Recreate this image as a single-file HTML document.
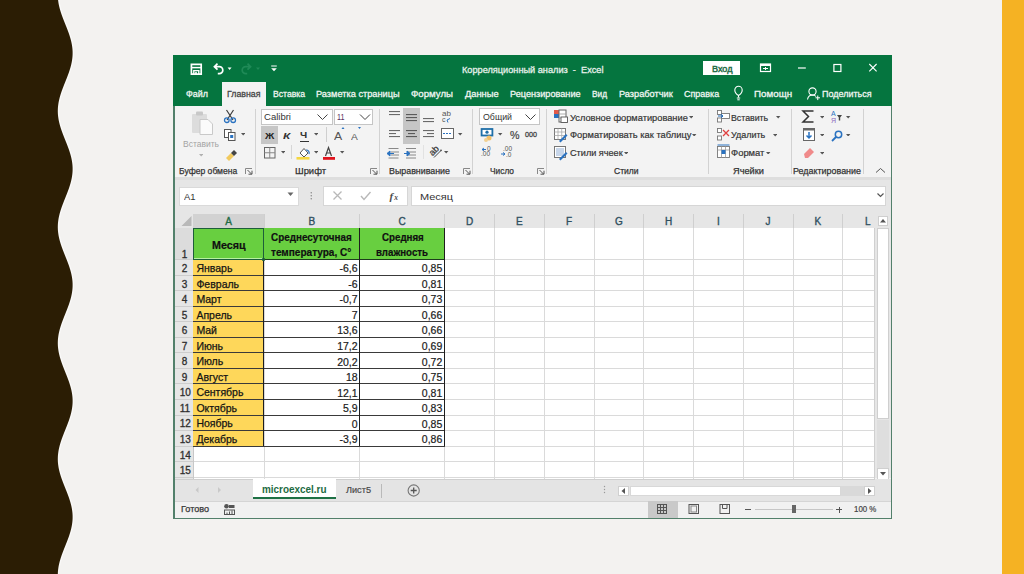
<!DOCTYPE html>
<html><head><meta charset="utf-8"><style>
html,body{margin:0;padding:0}
body{width:1024px;height:574px;overflow:hidden;position:relative;background:#f3f2f0;font-family:"Liberation Sans",sans-serif}
svg{display:block}
</style></head><body>
<svg style="position:absolute;left:0;top:0" width="1024" height="574"><path d="M58.97,0.0 L59.09,1.0 L59.23,2.0 L59.38,3.0 L59.56,4.0 L59.76,5.0 L59.98,6.0 L60.21,7.0 L60.46,8.0 L60.73,9.0 L61.01,10.0 L61.31,11.0 L61.62,12.0 L61.95,13.0 L62.28,14.0 L62.63,15.0 L62.99,16.0 L63.36,17.0 L63.74,18.0 L64.12,19.0 L64.51,20.0 L64.90,21.0 L65.30,22.0 L65.70,23.0 L66.10,24.0 L66.50,25.0 L66.90,26.0 L67.30,27.0 L67.69,28.0 L68.08,29.0 L68.46,30.0 L68.84,31.0 L69.21,32.0 L69.57,33.0 L69.92,34.0 L70.25,35.0 L70.58,36.0 L70.89,37.0 L71.19,38.0 L71.47,39.0 L71.74,40.0 L71.99,41.0 L72.22,42.0 L72.44,43.0 L72.64,44.0 L72.82,45.0 L72.97,46.0 L73.11,47.0 L73.23,48.0 L73.33,49.0 L73.40,50.0 L73.46,51.0 L73.49,52.0 L73.50,53.0 L73.49,54.0 L73.46,55.0 L73.40,56.0 L73.33,57.0 L73.23,58.0 L73.11,59.0 L72.97,60.0 L72.82,61.0 L72.64,62.0 L72.44,63.0 L72.22,64.0 L71.99,65.0 L71.74,66.0 L71.47,67.0 L71.19,68.0 L70.89,69.0 L70.58,70.0 L70.25,71.0 L69.92,72.0 L69.57,73.0 L69.21,74.0 L68.84,75.0 L68.46,76.0 L68.08,77.0 L67.69,78.0 L67.30,79.0 L66.90,80.0 L66.50,81.0 L66.10,82.0 L65.70,83.0 L65.30,84.0 L64.90,85.0 L64.51,86.0 L64.12,87.0 L63.74,88.0 L63.36,89.0 L62.99,90.0 L62.63,91.0 L62.28,92.0 L61.95,93.0 L61.62,94.0 L61.31,95.0 L61.01,96.0 L60.73,97.0 L60.46,98.0 L60.21,99.0 L59.98,100.0 L59.76,101.0 L59.56,102.0 L59.38,103.0 L59.23,104.0 L59.09,105.0 L58.97,106.0 L58.87,107.0 L58.80,108.0 L58.74,109.0 L58.71,110.0 L58.70,111.0 L58.71,112.0 L58.74,113.0 L58.80,114.0 L58.87,115.0 L58.97,116.0 L59.09,117.0 L59.23,118.0 L59.38,119.0 L59.56,120.0 L59.76,121.0 L59.98,122.0 L60.21,123.0 L60.46,124.0 L60.73,125.0 L61.01,126.0 L61.31,127.0 L61.62,128.0 L61.95,129.0 L62.28,130.0 L62.63,131.0 L62.99,132.0 L63.36,133.0 L63.74,134.0 L64.12,135.0 L64.51,136.0 L64.90,137.0 L65.30,138.0 L65.70,139.0 L66.10,140.0 L66.50,141.0 L66.90,142.0 L67.30,143.0 L67.69,144.0 L68.08,145.0 L68.46,146.0 L68.84,147.0 L69.21,148.0 L69.57,149.0 L69.92,150.0 L70.25,151.0 L70.58,152.0 L70.89,153.0 L71.19,154.0 L71.47,155.0 L71.74,156.0 L71.99,157.0 L72.22,158.0 L72.44,159.0 L72.64,160.0 L72.82,161.0 L72.97,162.0 L73.11,163.0 L73.23,164.0 L73.33,165.0 L73.40,166.0 L73.46,167.0 L73.49,168.0 L73.50,169.0 L73.49,170.0 L73.46,171.0 L73.40,172.0 L73.33,173.0 L73.23,174.0 L73.11,175.0 L72.97,176.0 L72.82,177.0 L72.64,178.0 L72.44,179.0 L72.22,180.0 L71.99,181.0 L71.74,182.0 L71.47,183.0 L71.19,184.0 L70.89,185.0 L70.58,186.0 L70.25,187.0 L69.92,188.0 L69.57,189.0 L69.21,190.0 L68.84,191.0 L68.46,192.0 L68.08,193.0 L67.69,194.0 L67.30,195.0 L66.90,196.0 L66.50,197.0 L66.10,198.0 L65.70,199.0 L65.30,200.0 L64.90,201.0 L64.51,202.0 L64.12,203.0 L63.74,204.0 L63.36,205.0 L62.99,206.0 L62.63,207.0 L62.28,208.0 L61.95,209.0 L61.62,210.0 L61.31,211.0 L61.01,212.0 L60.73,213.0 L60.46,214.0 L60.21,215.0 L59.98,216.0 L59.76,217.0 L59.56,218.0 L59.38,219.0 L59.23,220.0 L59.09,221.0 L58.97,222.0 L58.87,223.0 L58.80,224.0 L58.74,225.0 L58.71,226.0 L58.70,227.0 L58.71,228.0 L58.74,229.0 L58.80,230.0 L58.87,231.0 L58.97,232.0 L59.09,233.0 L59.23,234.0 L59.38,235.0 L59.56,236.0 L59.76,237.0 L59.98,238.0 L60.21,239.0 L60.46,240.0 L60.73,241.0 L61.01,242.0 L61.31,243.0 L61.62,244.0 L61.95,245.0 L62.28,246.0 L62.63,247.0 L62.99,248.0 L63.36,249.0 L63.74,250.0 L64.12,251.0 L64.51,252.0 L64.90,253.0 L65.30,254.0 L65.70,255.0 L66.10,256.0 L66.50,257.0 L66.90,258.0 L67.30,259.0 L67.69,260.0 L68.08,261.0 L68.46,262.0 L68.84,263.0 L69.21,264.0 L69.57,265.0 L69.92,266.0 L70.25,267.0 L70.58,268.0 L70.89,269.0 L71.19,270.0 L71.47,271.0 L71.74,272.0 L71.99,273.0 L72.22,274.0 L72.44,275.0 L72.64,276.0 L72.82,277.0 L72.97,278.0 L73.11,279.0 L73.23,280.0 L73.33,281.0 L73.40,282.0 L73.46,283.0 L73.49,284.0 L73.50,285.0 L73.49,286.0 L73.46,287.0 L73.40,288.0 L73.33,289.0 L73.23,290.0 L73.11,291.0 L72.97,292.0 L72.82,293.0 L72.64,294.0 L72.44,295.0 L72.22,296.0 L71.99,297.0 L71.74,298.0 L71.47,299.0 L71.19,300.0 L70.89,301.0 L70.58,302.0 L70.25,303.0 L69.92,304.0 L69.57,305.0 L69.21,306.0 L68.84,307.0 L68.46,308.0 L68.08,309.0 L67.69,310.0 L67.30,311.0 L66.90,312.0 L66.50,313.0 L66.10,314.0 L65.70,315.0 L65.30,316.0 L64.90,317.0 L64.51,318.0 L64.12,319.0 L63.74,320.0 L63.36,321.0 L62.99,322.0 L62.63,323.0 L62.28,324.0 L61.95,325.0 L61.62,326.0 L61.31,327.0 L61.01,328.0 L60.73,329.0 L60.46,330.0 L60.21,331.0 L59.98,332.0 L59.76,333.0 L59.56,334.0 L59.38,335.0 L59.23,336.0 L59.09,337.0 L58.97,338.0 L58.87,339.0 L58.80,340.0 L58.74,341.0 L58.71,342.0 L58.70,343.0 L58.71,344.0 L58.74,345.0 L58.80,346.0 L58.87,347.0 L58.97,348.0 L59.09,349.0 L59.23,350.0 L59.38,351.0 L59.56,352.0 L59.76,353.0 L59.98,354.0 L60.21,355.0 L60.46,356.0 L60.73,357.0 L61.01,358.0 L61.31,359.0 L61.62,360.0 L61.95,361.0 L62.28,362.0 L62.63,363.0 L62.99,364.0 L63.36,365.0 L63.74,366.0 L64.12,367.0 L64.51,368.0 L64.90,369.0 L65.30,370.0 L65.70,371.0 L66.10,372.0 L66.50,373.0 L66.90,374.0 L67.30,375.0 L67.69,376.0 L68.08,377.0 L68.46,378.0 L68.84,379.0 L69.21,380.0 L69.57,381.0 L69.92,382.0 L70.25,383.0 L70.58,384.0 L70.89,385.0 L71.19,386.0 L71.47,387.0 L71.74,388.0 L71.99,389.0 L72.22,390.0 L72.44,391.0 L72.64,392.0 L72.82,393.0 L72.97,394.0 L73.11,395.0 L73.23,396.0 L73.33,397.0 L73.40,398.0 L73.46,399.0 L73.49,400.0 L73.50,401.0 L73.49,402.0 L73.46,403.0 L73.40,404.0 L73.33,405.0 L73.23,406.0 L73.11,407.0 L72.97,408.0 L72.82,409.0 L72.64,410.0 L72.44,411.0 L72.22,412.0 L71.99,413.0 L71.74,414.0 L71.47,415.0 L71.19,416.0 L70.89,417.0 L70.58,418.0 L70.25,419.0 L69.92,420.0 L69.57,421.0 L69.21,422.0 L68.84,423.0 L68.46,424.0 L68.08,425.0 L67.69,426.0 L67.30,427.0 L66.90,428.0 L66.50,429.0 L66.10,430.0 L65.70,431.0 L65.30,432.0 L64.90,433.0 L64.51,434.0 L64.12,435.0 L63.74,436.0 L63.36,437.0 L62.99,438.0 L62.63,439.0 L62.28,440.0 L61.95,441.0 L61.62,442.0 L61.31,443.0 L61.01,444.0 L60.73,445.0 L60.46,446.0 L60.21,447.0 L59.98,448.0 L59.76,449.0 L59.56,450.0 L59.38,451.0 L59.23,452.0 L59.09,453.0 L58.97,454.0 L58.87,455.0 L58.80,456.0 L58.74,457.0 L58.71,458.0 L58.70,459.0 L58.71,460.0 L58.74,461.0 L58.80,462.0 L58.87,463.0 L58.97,464.0 L59.09,465.0 L59.23,466.0 L59.38,467.0 L59.56,468.0 L59.76,469.0 L59.98,470.0 L60.21,471.0 L60.46,472.0 L60.73,473.0 L61.01,474.0 L61.31,475.0 L61.62,476.0 L61.95,477.0 L62.28,478.0 L62.63,479.0 L62.99,480.0 L63.36,481.0 L63.74,482.0 L64.12,483.0 L64.51,484.0 L64.90,485.0 L65.30,486.0 L65.70,487.0 L66.10,488.0 L66.50,489.0 L66.90,490.0 L67.30,491.0 L67.69,492.0 L68.08,493.0 L68.46,494.0 L68.84,495.0 L69.21,496.0 L69.57,497.0 L69.92,498.0 L70.25,499.0 L70.58,500.0 L70.89,501.0 L71.19,502.0 L71.47,503.0 L71.74,504.0 L71.99,505.0 L72.22,506.0 L72.44,507.0 L72.64,508.0 L72.82,509.0 L72.97,510.0 L73.11,511.0 L73.23,512.0 L73.33,513.0 L73.40,514.0 L73.46,515.0 L73.49,516.0 L73.50,517.0 L73.49,518.0 L73.46,519.0 L73.40,520.0 L73.33,521.0 L73.23,522.0 L73.11,523.0 L72.97,524.0 L72.82,525.0 L72.64,526.0 L72.44,527.0 L72.22,528.0 L71.99,529.0 L71.74,530.0 L71.47,531.0 L71.19,532.0 L70.89,533.0 L70.58,534.0 L70.25,535.0 L69.92,536.0 L69.57,537.0 L69.21,538.0 L68.84,539.0 L68.46,540.0 L68.08,541.0 L67.69,542.0 L67.30,543.0 L66.90,544.0 L66.50,545.0 L66.10,546.0 L65.70,547.0 L65.30,548.0 L64.90,549.0 L64.51,550.0 L64.12,551.0 L63.74,552.0 L63.36,553.0 L62.99,554.0 L62.63,555.0 L62.28,556.0 L61.95,557.0 L61.62,558.0 L61.31,559.0 L61.01,560.0 L60.73,561.0 L60.46,562.0 L60.21,563.0 L59.98,564.0 L59.76,565.0 L59.56,566.0 L59.38,567.0 L59.23,568.0 L59.09,569.0 L58.97,570.0 L58.87,571.0 L58.80,572.0 L58.74,573.0 L58.71,574.0 L58.70,575.0" fill="none" stroke="#ffffff" stroke-opacity="0.6" stroke-width="1"/><path d="M0,0 L58.07,0.0 L58.19,1.0 L58.33,2.0 L58.48,3.0 L58.66,4.0 L58.86,5.0 L59.08,6.0 L59.31,7.0 L59.56,8.0 L59.83,9.0 L60.11,10.0 L60.41,11.0 L60.72,12.0 L61.05,13.0 L61.38,14.0 L61.73,15.0 L62.09,16.0 L62.46,17.0 L62.84,18.0 L63.22,19.0 L63.61,20.0 L64.00,21.0 L64.40,22.0 L64.80,23.0 L65.20,24.0 L65.60,25.0 L66.00,26.0 L66.40,27.0 L66.79,28.0 L67.18,29.0 L67.56,30.0 L67.94,31.0 L68.31,32.0 L68.67,33.0 L69.02,34.0 L69.35,35.0 L69.68,36.0 L69.99,37.0 L70.29,38.0 L70.57,39.0 L70.84,40.0 L71.09,41.0 L71.32,42.0 L71.54,43.0 L71.74,44.0 L71.92,45.0 L72.07,46.0 L72.21,47.0 L72.33,48.0 L72.43,49.0 L72.50,50.0 L72.56,51.0 L72.59,52.0 L72.60,53.0 L72.59,54.0 L72.56,55.0 L72.50,56.0 L72.43,57.0 L72.33,58.0 L72.21,59.0 L72.07,60.0 L71.92,61.0 L71.74,62.0 L71.54,63.0 L71.32,64.0 L71.09,65.0 L70.84,66.0 L70.57,67.0 L70.29,68.0 L69.99,69.0 L69.68,70.0 L69.35,71.0 L69.02,72.0 L68.67,73.0 L68.31,74.0 L67.94,75.0 L67.56,76.0 L67.18,77.0 L66.79,78.0 L66.40,79.0 L66.00,80.0 L65.60,81.0 L65.20,82.0 L64.80,83.0 L64.40,84.0 L64.00,85.0 L63.61,86.0 L63.22,87.0 L62.84,88.0 L62.46,89.0 L62.09,90.0 L61.73,91.0 L61.38,92.0 L61.05,93.0 L60.72,94.0 L60.41,95.0 L60.11,96.0 L59.83,97.0 L59.56,98.0 L59.31,99.0 L59.08,100.0 L58.86,101.0 L58.66,102.0 L58.48,103.0 L58.33,104.0 L58.19,105.0 L58.07,106.0 L57.97,107.0 L57.90,108.0 L57.84,109.0 L57.81,110.0 L57.80,111.0 L57.81,112.0 L57.84,113.0 L57.90,114.0 L57.97,115.0 L58.07,116.0 L58.19,117.0 L58.33,118.0 L58.48,119.0 L58.66,120.0 L58.86,121.0 L59.08,122.0 L59.31,123.0 L59.56,124.0 L59.83,125.0 L60.11,126.0 L60.41,127.0 L60.72,128.0 L61.05,129.0 L61.38,130.0 L61.73,131.0 L62.09,132.0 L62.46,133.0 L62.84,134.0 L63.22,135.0 L63.61,136.0 L64.00,137.0 L64.40,138.0 L64.80,139.0 L65.20,140.0 L65.60,141.0 L66.00,142.0 L66.40,143.0 L66.79,144.0 L67.18,145.0 L67.56,146.0 L67.94,147.0 L68.31,148.0 L68.67,149.0 L69.02,150.0 L69.35,151.0 L69.68,152.0 L69.99,153.0 L70.29,154.0 L70.57,155.0 L70.84,156.0 L71.09,157.0 L71.32,158.0 L71.54,159.0 L71.74,160.0 L71.92,161.0 L72.07,162.0 L72.21,163.0 L72.33,164.0 L72.43,165.0 L72.50,166.0 L72.56,167.0 L72.59,168.0 L72.60,169.0 L72.59,170.0 L72.56,171.0 L72.50,172.0 L72.43,173.0 L72.33,174.0 L72.21,175.0 L72.07,176.0 L71.92,177.0 L71.74,178.0 L71.54,179.0 L71.32,180.0 L71.09,181.0 L70.84,182.0 L70.57,183.0 L70.29,184.0 L69.99,185.0 L69.68,186.0 L69.35,187.0 L69.02,188.0 L68.67,189.0 L68.31,190.0 L67.94,191.0 L67.56,192.0 L67.18,193.0 L66.79,194.0 L66.40,195.0 L66.00,196.0 L65.60,197.0 L65.20,198.0 L64.80,199.0 L64.40,200.0 L64.00,201.0 L63.61,202.0 L63.22,203.0 L62.84,204.0 L62.46,205.0 L62.09,206.0 L61.73,207.0 L61.38,208.0 L61.05,209.0 L60.72,210.0 L60.41,211.0 L60.11,212.0 L59.83,213.0 L59.56,214.0 L59.31,215.0 L59.08,216.0 L58.86,217.0 L58.66,218.0 L58.48,219.0 L58.33,220.0 L58.19,221.0 L58.07,222.0 L57.97,223.0 L57.90,224.0 L57.84,225.0 L57.81,226.0 L57.80,227.0 L57.81,228.0 L57.84,229.0 L57.90,230.0 L57.97,231.0 L58.07,232.0 L58.19,233.0 L58.33,234.0 L58.48,235.0 L58.66,236.0 L58.86,237.0 L59.08,238.0 L59.31,239.0 L59.56,240.0 L59.83,241.0 L60.11,242.0 L60.41,243.0 L60.72,244.0 L61.05,245.0 L61.38,246.0 L61.73,247.0 L62.09,248.0 L62.46,249.0 L62.84,250.0 L63.22,251.0 L63.61,252.0 L64.00,253.0 L64.40,254.0 L64.80,255.0 L65.20,256.0 L65.60,257.0 L66.00,258.0 L66.40,259.0 L66.79,260.0 L67.18,261.0 L67.56,262.0 L67.94,263.0 L68.31,264.0 L68.67,265.0 L69.02,266.0 L69.35,267.0 L69.68,268.0 L69.99,269.0 L70.29,270.0 L70.57,271.0 L70.84,272.0 L71.09,273.0 L71.32,274.0 L71.54,275.0 L71.74,276.0 L71.92,277.0 L72.07,278.0 L72.21,279.0 L72.33,280.0 L72.43,281.0 L72.50,282.0 L72.56,283.0 L72.59,284.0 L72.60,285.0 L72.59,286.0 L72.56,287.0 L72.50,288.0 L72.43,289.0 L72.33,290.0 L72.21,291.0 L72.07,292.0 L71.92,293.0 L71.74,294.0 L71.54,295.0 L71.32,296.0 L71.09,297.0 L70.84,298.0 L70.57,299.0 L70.29,300.0 L69.99,301.0 L69.68,302.0 L69.35,303.0 L69.02,304.0 L68.67,305.0 L68.31,306.0 L67.94,307.0 L67.56,308.0 L67.18,309.0 L66.79,310.0 L66.40,311.0 L66.00,312.0 L65.60,313.0 L65.20,314.0 L64.80,315.0 L64.40,316.0 L64.00,317.0 L63.61,318.0 L63.22,319.0 L62.84,320.0 L62.46,321.0 L62.09,322.0 L61.73,323.0 L61.38,324.0 L61.05,325.0 L60.72,326.0 L60.41,327.0 L60.11,328.0 L59.83,329.0 L59.56,330.0 L59.31,331.0 L59.08,332.0 L58.86,333.0 L58.66,334.0 L58.48,335.0 L58.33,336.0 L58.19,337.0 L58.07,338.0 L57.97,339.0 L57.90,340.0 L57.84,341.0 L57.81,342.0 L57.80,343.0 L57.81,344.0 L57.84,345.0 L57.90,346.0 L57.97,347.0 L58.07,348.0 L58.19,349.0 L58.33,350.0 L58.48,351.0 L58.66,352.0 L58.86,353.0 L59.08,354.0 L59.31,355.0 L59.56,356.0 L59.83,357.0 L60.11,358.0 L60.41,359.0 L60.72,360.0 L61.05,361.0 L61.38,362.0 L61.73,363.0 L62.09,364.0 L62.46,365.0 L62.84,366.0 L63.22,367.0 L63.61,368.0 L64.00,369.0 L64.40,370.0 L64.80,371.0 L65.20,372.0 L65.60,373.0 L66.00,374.0 L66.40,375.0 L66.79,376.0 L67.18,377.0 L67.56,378.0 L67.94,379.0 L68.31,380.0 L68.67,381.0 L69.02,382.0 L69.35,383.0 L69.68,384.0 L69.99,385.0 L70.29,386.0 L70.57,387.0 L70.84,388.0 L71.09,389.0 L71.32,390.0 L71.54,391.0 L71.74,392.0 L71.92,393.0 L72.07,394.0 L72.21,395.0 L72.33,396.0 L72.43,397.0 L72.50,398.0 L72.56,399.0 L72.59,400.0 L72.60,401.0 L72.59,402.0 L72.56,403.0 L72.50,404.0 L72.43,405.0 L72.33,406.0 L72.21,407.0 L72.07,408.0 L71.92,409.0 L71.74,410.0 L71.54,411.0 L71.32,412.0 L71.09,413.0 L70.84,414.0 L70.57,415.0 L70.29,416.0 L69.99,417.0 L69.68,418.0 L69.35,419.0 L69.02,420.0 L68.67,421.0 L68.31,422.0 L67.94,423.0 L67.56,424.0 L67.18,425.0 L66.79,426.0 L66.40,427.0 L66.00,428.0 L65.60,429.0 L65.20,430.0 L64.80,431.0 L64.40,432.0 L64.00,433.0 L63.61,434.0 L63.22,435.0 L62.84,436.0 L62.46,437.0 L62.09,438.0 L61.73,439.0 L61.38,440.0 L61.05,441.0 L60.72,442.0 L60.41,443.0 L60.11,444.0 L59.83,445.0 L59.56,446.0 L59.31,447.0 L59.08,448.0 L58.86,449.0 L58.66,450.0 L58.48,451.0 L58.33,452.0 L58.19,453.0 L58.07,454.0 L57.97,455.0 L57.90,456.0 L57.84,457.0 L57.81,458.0 L57.80,459.0 L57.81,460.0 L57.84,461.0 L57.90,462.0 L57.97,463.0 L58.07,464.0 L58.19,465.0 L58.33,466.0 L58.48,467.0 L58.66,468.0 L58.86,469.0 L59.08,470.0 L59.31,471.0 L59.56,472.0 L59.83,473.0 L60.11,474.0 L60.41,475.0 L60.72,476.0 L61.05,477.0 L61.38,478.0 L61.73,479.0 L62.09,480.0 L62.46,481.0 L62.84,482.0 L63.22,483.0 L63.61,484.0 L64.00,485.0 L64.40,486.0 L64.80,487.0 L65.20,488.0 L65.60,489.0 L66.00,490.0 L66.40,491.0 L66.79,492.0 L67.18,493.0 L67.56,494.0 L67.94,495.0 L68.31,496.0 L68.67,497.0 L69.02,498.0 L69.35,499.0 L69.68,500.0 L69.99,501.0 L70.29,502.0 L70.57,503.0 L70.84,504.0 L71.09,505.0 L71.32,506.0 L71.54,507.0 L71.74,508.0 L71.92,509.0 L72.07,510.0 L72.21,511.0 L72.33,512.0 L72.43,513.0 L72.50,514.0 L72.56,515.0 L72.59,516.0 L72.60,517.0 L72.59,518.0 L72.56,519.0 L72.50,520.0 L72.43,521.0 L72.33,522.0 L72.21,523.0 L72.07,524.0 L71.92,525.0 L71.74,526.0 L71.54,527.0 L71.32,528.0 L71.09,529.0 L70.84,530.0 L70.57,531.0 L70.29,532.0 L69.99,533.0 L69.68,534.0 L69.35,535.0 L69.02,536.0 L68.67,537.0 L68.31,538.0 L67.94,539.0 L67.56,540.0 L67.18,541.0 L66.79,542.0 L66.40,543.0 L66.00,544.0 L65.60,545.0 L65.20,546.0 L64.80,547.0 L64.40,548.0 L64.00,549.0 L63.61,550.0 L63.22,551.0 L62.84,552.0 L62.46,553.0 L62.09,554.0 L61.73,555.0 L61.38,556.0 L61.05,557.0 L60.72,558.0 L60.41,559.0 L60.11,560.0 L59.83,561.0 L59.56,562.0 L59.31,563.0 L59.08,564.0 L58.86,565.0 L58.66,566.0 L58.48,567.0 L58.33,568.0 L58.19,569.0 L58.07,570.0 L57.97,571.0 L57.90,572.0 L57.84,573.0 L57.81,574.0 L57.80,575.0 L0,574 Z" fill="#2b1d04"/></svg>
<div style="position:absolute;left:1002px;top:0px;width:22px;height:574px;background:#f5b223;"></div>
<div style="position:absolute;left:173px;top:55px;width:719px;height:464px;background:#52806b;"></div>
<div style="position:absolute;left:174.5px;top:105.5px;width:716px;height:412.0px;background:#f3f3f3;"></div>
<div style="position:absolute;left:173px;top:55px;width:719px;height:50.5px;background:#05753f;"></div>
<svg style="position:absolute;left:188px;top:60px" width="95" height="20">
<path d="M3.4,4.4 h9.8 v9.8 h-9.8 z" fill="none" stroke="#fff" stroke-width="1.7"/>
<path d="M3.4,7.6 h9.8" stroke="#fff" stroke-width="1.5"/>
<path d="M5.8,14.2 v-3.6 h5 v3.6" fill="none" stroke="#fff" stroke-width="1.4"/>
<rect x="7.2" y="11.8" width="1.6" height="2.4" fill="#fff"/>
<path d="M29.5,9.7 l-3.1,-3 l3.1,-3 M26.8,6.7 h4.5 a3.5,3.5 0 0 1 0,7 h-1.5" fill="none" stroke="#fff" stroke-width="1.7"/>
<path d="M39.6,7.6 h4 l-2,2.3 z" fill="#fff"/>
<path d="M59.5,9.7 l3.1,-3 l-3.1,-3 M62.2,6.7 h-4.5 a3.5,3.5 0 0 0 0,7 h1.5" fill="none" stroke="#1f8a57" stroke-width="1.7"/>
<path d="M68,7.6 h4 l-2,2.3 z" fill="#1f8a57"/>
<path d="M83.2,6 h5.6" stroke="#fff" stroke-width="1"/>
<path d="M83.2,8.2 h5.6 l-2.8,3 z" fill="#fff"/>
</svg>
<div style="position:absolute;left:461.50px;top:64.76px;font:400 9.5px/9.5px 'Liberation Sans',sans-serif;color:#e6f1ea;white-space:pre;transform:scaleX(0.9671);transform-origin:0 0;-webkit-text-stroke:0.3px #e6f1ea;">Корреляционный анализ  -  Excel</div>
<div style="position:absolute;left:702.8px;top:60.9px;width:37.1px;height:14.6px;background:#ffffff;"></div>
<div style="position:absolute;left:711.60px;top:63.76px;font:400 9.5px/9.5px 'Liberation Sans',sans-serif;color:#1e6b44;white-space:pre;transform:scaleX(0.9535);transform-origin:0 0;-webkit-text-stroke:0.45px #1e6b44;">Вход</div>
<svg style="position:absolute;left:758px;top:61px" width="130" height="14">
<rect x="2.5" y="3" width="10" height="7.5" fill="none" stroke="#fff" stroke-width="1.2"/>
<rect x="2.5" y="3" width="10" height="2" fill="#fff"/>
<path d="M5,7.5 h5 M7.5,6 v3" stroke="#fff" stroke-width="1"/>
<path d="M40,7 h7.8" stroke="#fff" stroke-width="1.2"/>
<rect x="75.9" y="3.5" width="7" height="7" fill="none" stroke="#fff" stroke-width="1.2"/>
<path d="M111.3,3 l7.3,7.3 M118.6,3 l-7.3,7.3" stroke="#fff" stroke-width="1.1"/>
</svg>
<div style="position:absolute;left:221.5px;top:82px;width:44.1px;height:23.5px;background:#f3f3f3;"></div>
<div style="position:absolute;left:186.00px;top:89.16px;font:400 9.5px/9.5px 'Liberation Sans',sans-serif;color:#f0f6f2;white-space:pre;transform:scaleX(0.9418);transform-origin:0 0;-webkit-text-stroke:0.3px #f0f6f2;">Файл</div>
<div style="position:absolute;left:226.50px;top:89.16px;font:400 9.5px/9.5px 'Liberation Sans',sans-serif;color:#444444;white-space:pre;transform:scaleX(0.9261);transform-origin:0 0;-webkit-text-stroke:0.3px #444444;">Главная</div>
<div style="position:absolute;left:272.60px;top:89.16px;font:400 9.5px/9.5px 'Liberation Sans',sans-serif;color:#f0f6f2;white-space:pre;transform:scaleX(0.9090);transform-origin:0 0;-webkit-text-stroke:0.3px #f0f6f2;">Вставка</div>
<div style="position:absolute;left:316.40px;top:89.16px;font:400 9.5px/9.5px 'Liberation Sans',sans-serif;color:#f0f6f2;white-space:pre;transform:scaleX(0.9700);transform-origin:0 0;-webkit-text-stroke:0.3px #f0f6f2;">Разметка страницы</div>
<div style="position:absolute;left:411.00px;top:89.16px;font:400 9.5px/9.5px 'Liberation Sans',sans-serif;color:#f0f6f2;white-space:pre;transform:scaleX(1.0159);transform-origin:0 0;-webkit-text-stroke:0.3px #f0f6f2;">Формулы</div>
<div style="position:absolute;left:465.00px;top:89.16px;font:400 9.5px/9.5px 'Liberation Sans',sans-serif;color:#f0f6f2;white-space:pre;transform:scaleX(0.9788);transform-origin:0 0;-webkit-text-stroke:0.3px #f0f6f2;">Данные</div>
<div style="position:absolute;left:510.00px;top:89.16px;font:400 9.5px/9.5px 'Liberation Sans',sans-serif;color:#f0f6f2;white-space:pre;transform:scaleX(0.9624);transform-origin:0 0;-webkit-text-stroke:0.3px #f0f6f2;">Рецензирование</div>
<div style="position:absolute;left:592.00px;top:89.16px;font:400 9.5px/9.5px 'Liberation Sans',sans-serif;color:#f0f6f2;white-space:pre;transform:scaleX(0.8727);transform-origin:0 0;-webkit-text-stroke:0.3px #f0f6f2;">Вид</div>
<div style="position:absolute;left:618.80px;top:89.16px;font:400 9.5px/9.5px 'Liberation Sans',sans-serif;color:#f0f6f2;white-space:pre;transform:scaleX(0.9692);transform-origin:0 0;-webkit-text-stroke:0.3px #f0f6f2;">Разработчик</div>
<div style="position:absolute;left:683.80px;top:89.16px;font:400 9.5px/9.5px 'Liberation Sans',sans-serif;color:#f0f6f2;white-space:pre;transform:scaleX(0.9442);transform-origin:0 0;-webkit-text-stroke:0.3px #f0f6f2;">Справка</div>
<div style="position:absolute;left:753.50px;top:89.16px;font:400 9.5px/9.5px 'Liberation Sans',sans-serif;color:#f0f6f2;white-space:pre;transform:scaleX(1.0297);transform-origin:0 0;-webkit-text-stroke:0.3px #f0f6f2;">Помощн</div>
<div style="position:absolute;left:822.00px;top:89.16px;font:400 9.5px/9.5px 'Liberation Sans',sans-serif;color:#f0f6f2;white-space:pre;transform:scaleX(0.9453);transform-origin:0 0;-webkit-text-stroke:0.3px #f0f6f2;">Поделиться</div>
<svg style="position:absolute;left:730px;top:84px" width="95" height="18">
<path d="M8.5,13.5 v-2 c-2.5,-1.5 -3.7,-3.3 -3.7,-5.5 a3.7,3.7 0 0 1 7.4,0 c0,2.2 -1.2,4 -3.7,5.5" fill="none" stroke="#fff" stroke-width="1.1"/>
<path d="M6.8,14 h3.4 M7.3,15.8 h2.4" stroke="#fff" stroke-width="1"/>
<circle cx="82.5" cy="7.5" r="3.6" fill="none" stroke="#fff" stroke-width="1.1"/>
<path d="M77.5,15.5 c0.5,-3 2.5,-4.5 5,-4.5 c1.5,0 2.7,0.5 3.5,1.5" fill="none" stroke="#fff" stroke-width="1.1"/>
<path d="M85.5,13.8 h4.5 M87.75,11.5 v4.6" stroke="#fff" stroke-width="1"/>
</svg>
<svg style="position:absolute;left:190px;top:110px" width="26" height="27">
<rect x="2" y="4" width="15" height="19" rx="1" fill="#dcdcdc"/>
<rect x="6" y="1.5" width="7" height="4" rx="1" fill="#c8c8c8"/>
<path d="M10,9.5 h8 l4.5,4.5 v10.5 h-12.5 z" fill="#fbfbfb" stroke="#c9c9c9" stroke-width="1"/>
</svg>
<div style="position:absolute;left:182.80px;top:139.68px;font:400 9px/9px 'Liberation Sans',sans-serif;color:#a3a3a3;white-space:pre;transform:scaleX(0.9435);transform-origin:0 0;">Вставить</div>
<svg style="position:absolute;left:198.60000000000002px;top:154.3px" width="4.4" height="2.6"><path d="M0,0 h4.4 l-2.2,2.6 z" fill="#b0b0b0"/></svg>
<svg style="position:absolute;left:222px;top:108px" width="26" height="54">
<path d="M4.5,2 l6.5,10 M11.5,2 l-6.5,10" stroke="#3d3d3d" stroke-width="1.2"/>
<circle cx="4.8" cy="12.2" r="2.3" fill="none" stroke="#2a72c0" stroke-width="1.3"/>
<circle cx="11.2" cy="12.2" r="2.3" fill="none" stroke="#2a72c0" stroke-width="1.3"/>
<rect x="2.5" y="21.5" width="6.5" height="8" fill="#fff" stroke="#555" stroke-width="1"/>
<rect x="6.5" y="24.5" width="6.5" height="8" fill="#fff" stroke="#555" stroke-width="1"/>
<rect x="8.2" y="27" width="3" height="3" fill="#2a72c0"/>
<path d="M4,50 l5,-5 l3,3 l-5,5 z" fill="#f1c95e"/>
<path d="M9,45 l3,-3 l3,3 l-3,3 z" fill="#444"/>
</svg>
<svg style="position:absolute;left:240.8px;top:133.20000000000002px" width="4.4" height="2.6"><path d="M0,0 h4.4 l-2.2,2.6 z" fill="#555"/></svg>
<div style="position:absolute;left:178.70px;top:166.58px;font:400 9px/9px 'Liberation Sans',sans-serif;color:#333333;white-space:pre;transform:scaleX(0.9533);transform-origin:0 0;-webkit-text-stroke:0.25px #333;">Буфер обмена</div>
<svg style="position:absolute;left:245px;top:168px" width="8" height="7"><path d="M0.5,6 v-5.5 h6.5" fill="none" stroke="#888" stroke-width="1"/><path d="M2.5,2 l4,4 M3.5,6.2 h3.5 v-3.5" fill="none" stroke="#555" stroke-width="1"/></svg>
<div style="position:absolute;left:254.5px;top:109px;width:1px;height:65px;background:#d2d2d2;"></div>
<div style="position:absolute;left:261.4px;top:108.6px;width:71.4px;height:16.6px;background:#ffffff;box-sizing:border-box;border:1px solid #c5c5c5"></div>
<div style="position:absolute;left:333.8px;top:108.6px;width:39.2px;height:16.6px;background:#ffffff;box-sizing:border-box;border:1px solid #c5c5c5"></div>
<div style="position:absolute;left:264.30px;top:112.98px;font:400 9px/9px 'Liberation Sans',sans-serif;color:#333;white-space:pre;transform:scaleX(1.0582);transform-origin:0 0;">Calibri</div>
<div style="position:absolute;left:337.00px;top:112.98px;font:400 9px/9px 'Liberation Sans',sans-serif;color:#5a3060;white-space:pre;transform:scaleX(0.8027);transform-origin:0 0;">11</div>
<svg style="position:absolute;left:316px;top:112px" width="60" height="10">
<path d="M1.5,2.5 l5,5 l5,-5" fill="none" stroke="#444" stroke-width="1"/>
<path d="M44,2.5 l5,5 l5,-5" fill="none" stroke="#444" stroke-width="1"/>
</svg>
<div style="position:absolute;left:261px;top:125.8px;width:17px;height:18px;background:#c6c6c6;"></div>
<div style="position:absolute;left:264.70px;top:130.56px;font:700 9.5px/9.5px 'Liberation Sans',sans-serif;color:#262626;white-space:pre;transform:scaleX(1.0822);transform-origin:0 0;">Ж</div>
<div style="position:absolute;left:283.00px;top:130.56px;font:700 9.5px/9.5px 'Liberation Sans',sans-serif;color:#333;white-space:pre;transform:scaleX(1.2387);transform-origin:0 0;font-style:italic;">К</div>
<div style="position:absolute;left:300.40px;top:129.96px;font:700 9.5px/9.5px 'Liberation Sans',sans-serif;color:#333;white-space:pre;transform:scaleX(1.0766);transform-origin:0 0;">Ч</div>
<div style="position:absolute;left:300px;top:140.5px;width:8.5px;height:1px;background:#333;"></div>
<svg style="position:absolute;left:313.8px;top:133.4px" width="4.4" height="2.6"><path d="M0,0 h4.4 l-2.2,2.6 z" fill="#555"/></svg>
<div style="position:absolute;left:325.5px;top:126.5px;width:1px;height:15.5px;background:#cfcfcf;"></div>
<div style="position:absolute;left:333.50px;top:131.19px;font:400 11px/11px 'Liberation Sans',sans-serif;color:#555;white-space:pre;transform:scaleX(1.1166);transform-origin:0 0;">A</div>
<div style="position:absolute;left:351.00px;top:132.88px;font:400 9px/9px 'Liberation Sans',sans-serif;color:#555;white-space:pre;transform:scaleX(1.1304);transform-origin:0 0;">A</div>
<svg style="position:absolute;left:340px;top:126px" width="24" height="6">
<path d="M1.5,3 l1.5,-2 l1.5,2 z" fill="#2a72c0"/>
<path d="M18,1 l1.5,2 l1.5,-2 z" fill="#2a72c0"/>
</svg>
<svg style="position:absolute;left:262px;top:145px" width="90" height="16">
<rect x="2.5" y="2.5" width="10.5" height="10.5" fill="none" stroke="#666" stroke-width="1"/>
<path d="M7.75,2.5 v10.5 M2.5,7.75 h10.5" stroke="#888" stroke-width="1"/>
<path d="M38,8 l4,-4.5 l4,4.5 l-4,4 z" fill="#fff" stroke="#555" stroke-width="1"/>
<path d="M44,5 a3,3 0 0 1 3,4" fill="none" stroke="#2a72c0" stroke-width="1.2"/>
<rect x="34.5" y="12" width="13" height="2.6" fill="#f5d742"/>
<path d="M63.5,11 l3,-8.5 l3,8.5 M64.5,8 h4" fill="none" stroke="#444" stroke-width="1.2"/>
<rect x="61" y="12" width="12" height="2.8" fill="#e0141e"/>
</svg>
<svg style="position:absolute;left:280.8px;top:151.3px" width="4.4" height="2.6"><path d="M0,0 h4.4 l-2.2,2.6 z" fill="#555"/></svg>
<div style="position:absolute;left:291.4px;top:145px;width:1px;height:14px;background:#d6d6d6;"></div>
<svg style="position:absolute;left:313.8px;top:151.3px" width="4.4" height="2.6"><path d="M0,0 h4.4 l-2.2,2.6 z" fill="#555"/></svg>
<svg style="position:absolute;left:340.40000000000003px;top:151.3px" width="4.4" height="2.6"><path d="M0,0 h4.4 l-2.2,2.6 z" fill="#555"/></svg>
<div style="position:absolute;left:295.00px;top:166.58px;font:400 9px/9px 'Liberation Sans',sans-serif;color:#333333;white-space:pre;transform:scaleX(1.0464);transform-origin:0 0;-webkit-text-stroke:0.25px #333;">Шрифт</div>
<svg style="position:absolute;left:369.5px;top:168px" width="8" height="7"><path d="M0.5,6 v-5.5 h6.5" fill="none" stroke="#888" stroke-width="1"/><path d="M2.5,2 l4,4 M3.5,6.2 h3.5 v-3.5" fill="none" stroke="#555" stroke-width="1"/></svg>
<div style="position:absolute;left:379.4px;top:109px;width:1px;height:65px;background:#d2d2d2;"></div>
<div style="position:absolute;left:402.8px;top:107.8px;width:17.2px;height:36px;background:#c6c6c6;"></div>
<svg style="position:absolute;left:388.8px;top:110.5px" width="20" height="12"><rect x="0" y="0" width="11" height="1.1" fill="#6a6a6a"/><rect x="0" y="3" width="11" height="1.1" fill="#6a6a6a"/></svg>
<svg style="position:absolute;left:406px;top:113.5px" width="20" height="12"><rect x="0" y="0" width="11" height="1.1" fill="#5a5a5a"/><rect x="0" y="3" width="11" height="1.1" fill="#5a5a5a"/><rect x="0" y="6" width="11" height="1.1" fill="#5a5a5a"/></svg>
<svg style="position:absolute;left:423px;top:117.5px" width="20" height="12"><rect x="0" y="0" width="11" height="1.1" fill="#6a6a6a"/><rect x="0" y="3" width="11" height="1.1" fill="#6a6a6a"/></svg>
<svg style="position:absolute;left:388.8px;top:130px" width="20" height="12"><rect x="0" y="0" width="11" height="1.1" fill="#6a6a6a"/><rect x="0" y="3" width="7" height="1.1" fill="#6a6a6a"/><rect x="0" y="6" width="11" height="1.1" fill="#6a6a6a"/></svg>
<svg style="position:absolute;left:406px;top:130px" width="20" height="12"><rect x="0" y="0" width="11" height="1.1" fill="#5a5a5a"/><rect x="2" y="3" width="7" height="1.1" fill="#5a5a5a"/><rect x="0" y="6" width="11" height="1.1" fill="#5a5a5a"/></svg>
<svg style="position:absolute;left:423px;top:130px" width="20" height="12"><rect x="0" y="0" width="11" height="1.1" fill="#6a6a6a"/><rect x="4" y="3" width="7" height="1.1" fill="#6a6a6a"/><rect x="0" y="6" width="11" height="1.1" fill="#6a6a6a"/></svg>
<svg style="position:absolute;left:386px;top:108px" width="80" height="52">
<text x="56" y="8" font-family="Liberation Sans" font-size="8" fill="#555">ab</text>
<text x="56" y="14" font-family="Liberation Sans" font-size="7" fill="#555">c</text>
<path d="M61,12 l3,-1.5 m-3,1.5 l1,2.5" stroke="#2a72c0" stroke-width="1"/>
<rect x="55.5" y="20.5" width="12" height="10" fill="#fff" stroke="#666" stroke-width="1"/>
<path d="M57,25.5 h9" stroke="#2a72c0" stroke-width="1" stroke-dasharray="2,1"/>
<path d="M2.5,40.5 h10 M5,44 h8 M5,47 h8 M2.5,50 h10" stroke="#888" stroke-width="1"/>
<path d="M1,45.5 l3,-2.5 v5 z M4,45.5 h4" fill="#2a72c0" stroke="#2a72c0" stroke-width="1"/>
<path d="M20,40.5 h10 M22,44 h8 M22,47 h8 M20,50 h10" stroke="#888" stroke-width="1"/>
<path d="M24,45.5 l-3,-2.5 v5 z M18,45.5 h5" fill="#2a72c0" stroke="#2a72c0" stroke-width="1"/>
<text x="48" y="45.5" text-anchor="middle" font-family="Liberation Sans" font-size="9" fill="#3a3a3a" stroke="#3a3a3a" stroke-width="0.3" transform="rotate(-45 48 42.5)">ab</text>
<path d="M48,49.5 l6.5,-6.5" fill="none" stroke="#444" stroke-width="1"/>
<circle cx="55" cy="42.3" r="0.9" fill="#444"/>
</svg>
<svg style="position:absolute;left:458.40000000000003px;top:133.4px" width="4.4" height="2.6"><path d="M0,0 h4.4 l-2.2,2.6 z" fill="#555"/></svg>
<div style="position:absolute;left:423px;top:145px;width:1px;height:14px;background:#e2e2e2;"></div>
<svg style="position:absolute;left:444.40000000000003px;top:151.3px" width="4.4" height="2.6"><path d="M0,0 h4.4 l-2.2,2.6 z" fill="#555"/></svg>
<div style="position:absolute;left:388.80px;top:166.58px;font:400 9px/9px 'Liberation Sans',sans-serif;color:#333333;white-space:pre;transform:scaleX(0.9846);transform-origin:0 0;-webkit-text-stroke:0.25px #333;">Выравнивание</div>
<svg style="position:absolute;left:463px;top:168px" width="8" height="7"><path d="M0.5,6 v-5.5 h6.5" fill="none" stroke="#888" stroke-width="1"/><path d="M2.5,2 l4,4 M3.5,6.2 h3.5 v-3.5" fill="none" stroke="#555" stroke-width="1"/></svg>
<div style="position:absolute;left:472px;top:109px;width:1px;height:65px;background:#d2d2d2;"></div>
<div style="position:absolute;left:479px;top:107.8px;width:60.7px;height:17.5px;background:#ffffff;box-sizing:border-box;border:1px solid #c5c5c5"></div>
<div style="position:absolute;left:482.50px;top:112.98px;font:400 9px/9px 'Liberation Sans',sans-serif;color:#333;white-space:pre;transform:scaleX(0.9789);transform-origin:0 0;">Общий</div>
<svg style="position:absolute;left:524px;top:112px" width="14" height="10"><path d="M1.5,2.5 l5,5 l5,-5" fill="none" stroke="#444" stroke-width="1"/></svg>
<svg style="position:absolute;left:479px;top:126px" width="64" height="34">
<rect x="2.6" y="3" width="10.8" height="6.5" fill="#fff" stroke="#1f6fa8" stroke-width="1.8"/>
<circle cx="8" cy="6.2" r="1.6" fill="#1f6fa8"/>
<circle cx="10" cy="12" r="2.5" fill="#f3c06a"/>
<circle cx="7" cy="14" r="2" fill="#f3d090"/>
<text x="2" y="30" font-family="Liberation Sans" font-size="6.5" fill="#555">.00</text>
<path d="M3,23.5 h4 M3,23.5 l2,-1.5 M3,23.5 l2,1.5" stroke="#2a72c0" stroke-width="1" fill="none"/>
<text x="8" y="25" font-family="Liberation Sans" font-size="6.5" fill="#555">0</text>
<text x="24" y="25" font-family="Liberation Sans" font-size="6.5" fill="#555">.00</text>
<path d="M22,28 h4 M26,28 l-2,-1.5 M26,28 l-2,1.5" stroke="#2a72c0" stroke-width="1" fill="none"/>
<text x="27" y="31" font-family="Liberation Sans" font-size="6.5" fill="#555">.0</text>
</svg>
<svg style="position:absolute;left:498.40000000000003px;top:133.4px" width="4.4" height="2.6"><path d="M0,0 h4.4 l-2.2,2.6 z" fill="#555"/></svg>
<div style="position:absolute;left:509.50px;top:129.99px;font:400 11px/11px 'Liberation Sans',sans-serif;color:#444;white-space:pre;transform:scaleX(0.9712);transform-origin:0 0;-webkit-text-stroke:0.2px #444;">%</div>
<div style="position:absolute;left:525.00px;top:130.95px;font:400 7.5px/7.5px 'Liberation Sans',sans-serif;color:#444;white-space:pre;transform:scaleX(0.9588);transform-origin:0 0;-webkit-text-stroke:0.3px #444;">000</div>
<div style="position:absolute;left:490.00px;top:166.58px;font:400 9px/9px 'Liberation Sans',sans-serif;color:#333333;white-space:pre;transform:scaleX(0.9270);transform-origin:0 0;-webkit-text-stroke:0.25px #333;">Число</div>
<svg style="position:absolute;left:536.5px;top:168px" width="8" height="7"><path d="M0.5,6 v-5.5 h6.5" fill="none" stroke="#888" stroke-width="1"/><path d="M2.5,2 l4,4 M3.5,6.2 h3.5 v-3.5" fill="none" stroke="#555" stroke-width="1"/></svg>
<div style="position:absolute;left:545.5px;top:109px;width:1px;height:65px;background:#d2d2d2;"></div>
<svg style="position:absolute;left:553px;top:109px" width="16" height="52">
<rect x="1" y="1" width="5" height="4" fill="#e25a4a"/><rect x="1" y="5" width="7" height="4" fill="#2a72c0"/>
<rect x="6" y="1" width="7" height="12" fill="#fff" stroke="#666" stroke-width="1"/>
<path d="M6,5 h7 M6,9 h7" stroke="#999" stroke-width="0.8"/>
<rect x="8" y="8" width="6.5" height="5.5" fill="#fff" stroke="#555" stroke-width="0.9"/>
<rect x="1.5" y="19.5" width="11" height="11" fill="#fff" stroke="#777" stroke-width="1"/>
<path d="M1.5,23 h11 M1.5,26.5 h11 M5,19.5 v11 M8.7,19.5 v11" stroke="#aaa" stroke-width="0.8"/>
<path d="M6,32 l7,-7 l1.5,1.5 l-7,7 z" fill="#2a72c0"/>
<rect x="1.5" y="37.5" width="11" height="11" fill="#fff" stroke="#777" stroke-width="1"/>
<rect x="3" y="39" width="8" height="8" fill="#c7d6ea"/>
<path d="M6,50 l7,-7 l1.5,1.5 l-7,7 z" fill="#2a72c0"/>
</svg>
<div style="position:absolute;left:569.60px;top:112.86px;font:400 9.5px/9.5px 'Liberation Sans',sans-serif;color:#333;white-space:pre;transform:scaleX(0.9747);transform-origin:0 0;-webkit-text-stroke:0.2px #333;">Условное форматирование</div>
<div style="position:absolute;left:569.60px;top:130.26px;font:400 9.5px/9.5px 'Liberation Sans',sans-serif;color:#333;white-space:pre;transform:scaleX(0.9821);transform-origin:0 0;-webkit-text-stroke:0.2px #333;">Форматировать как таблицу</div>
<div style="position:absolute;left:569.60px;top:147.96px;font:400 9.5px/9.5px 'Liberation Sans',sans-serif;color:#333;white-space:pre;transform:scaleX(0.9612);transform-origin:0 0;-webkit-text-stroke:0.2px #333;">Стили ячеек</div>
<svg style="position:absolute;left:688.8px;top:116.3px" width="4.4" height="2.6"><path d="M0,0 h4.4 l-2.2,2.6 z" fill="#555"/></svg>
<svg style="position:absolute;left:692.1999999999999px;top:133.8px" width="4.4" height="2.6"><path d="M0,0 h4.4 l-2.2,2.6 z" fill="#555"/></svg>
<svg style="position:absolute;left:623.8px;top:151.5px" width="4.4" height="2.6"><path d="M0,0 h4.4 l-2.2,2.6 z" fill="#555"/></svg>
<div style="position:absolute;left:614.40px;top:166.58px;font:400 9px/9px 'Liberation Sans',sans-serif;color:#333333;white-space:pre;transform:scaleX(0.9484);transform-origin:0 0;-webkit-text-stroke:0.25px #333;">Стили</div>
<div style="position:absolute;left:707.6px;top:109px;width:1px;height:65px;background:#d2d2d2;"></div>
<svg style="position:absolute;left:716px;top:109px" width="16" height="50">
<rect x="1.5" y="1.5" width="4" height="4" fill="#fff" stroke="#777" stroke-width="0.9"/>
<rect x="1.5" y="9" width="4" height="4" fill="#fff" stroke="#777" stroke-width="0.9"/>
<rect x="5.5" y="4.5" width="8" height="5" fill="#fff" stroke="#777" stroke-width="0.9"/>
<path d="M2,7 h5 l-2,-2 m2,2 l-2,2" stroke="#2a72c0" stroke-width="1" fill="none"/>
<rect x="1.5" y="19.5" width="4" height="4" fill="#fff" stroke="#777" stroke-width="0.9"/>
<rect x="1.5" y="27" width="4" height="4" fill="#fff" stroke="#777" stroke-width="0.9"/>
<path d="M7,21 l6,6 M13,21 l-6,6" stroke="#e04040" stroke-width="1.3"/>
<rect x="1.5" y="37.5" width="12" height="11" fill="#fff" stroke="#777" stroke-width="0.9"/>
<path d="M1.5,41 h12 M5.5,37.5 v11 M9.5,37.5 v11" stroke="#999" stroke-width="0.8"/>
<rect x="5.5" y="41" width="4" height="4" fill="#2a72c0"/>
<path d="M1.5,36 h12" stroke="#2a72c0" stroke-width="1"/>
</svg>
<div style="position:absolute;left:731.40px;top:112.66px;font:400 9.5px/9.5px 'Liberation Sans',sans-serif;color:#333;white-space:pre;transform:scaleX(0.9235);transform-origin:0 0;-webkit-text-stroke:0.2px #333;">Вставить</div>
<div style="position:absolute;left:731.40px;top:130.46px;font:400 9.5px/9.5px 'Liberation Sans',sans-serif;color:#333;white-space:pre;transform:scaleX(0.9454);transform-origin:0 0;-webkit-text-stroke:0.2px #333;">Удалить</div>
<div style="position:absolute;left:731.40px;top:148.26px;font:400 9.5px/9.5px 'Liberation Sans',sans-serif;color:#333;white-space:pre;transform:scaleX(0.9896);transform-origin:0 0;-webkit-text-stroke:0.2px #333;">Формат</div>
<svg style="position:absolute;left:776.3px;top:116.3px" width="4.4" height="2.6"><path d="M0,0 h4.4 l-2.2,2.6 z" fill="#555"/></svg>
<svg style="position:absolute;left:772.8px;top:134.0px" width="4.4" height="2.6"><path d="M0,0 h4.4 l-2.2,2.6 z" fill="#555"/></svg>
<svg style="position:absolute;left:766.4px;top:151.8px" width="4.4" height="2.6"><path d="M0,0 h4.4 l-2.2,2.6 z" fill="#555"/></svg>
<div style="position:absolute;left:733.00px;top:166.58px;font:400 9px/9px 'Liberation Sans',sans-serif;color:#333333;white-space:pre;transform:scaleX(1.0203);transform-origin:0 0;-webkit-text-stroke:0.25px #333;">Ячейки</div>
<div style="position:absolute;left:791px;top:109px;width:1px;height:65px;background:#d2d2d2;"></div>
<svg style="position:absolute;left:800px;top:108px" width="50" height="52">
<path d="M13.5,3 h-10.5 l5.5,5.5 l-5.5,5.5 h10.5" fill="none" stroke="#333" stroke-width="1.5"/>
<rect x="3.5" y="20.5" width="11" height="12" fill="#fff" stroke="#666" stroke-width="1"/>
<rect x="3.5" y="20.5" width="11" height="2" fill="#666"/>
<path d="M9,24 v6 M6.5,27.5 l2.5,2.5 l2.5,-2.5" fill="none" stroke="#2a72c0" stroke-width="1.5"/>
<path d="M4,46 l6,-6 l4,4 l-6,6 h-3 z" fill="#f08a8a"/>
<text x="31" y="8" font-family="Liberation Sans" font-size="7" fill="#2a72c0">А</text>
<text x="31" y="15" font-family="Liberation Sans" font-size="7" fill="#8a6abf">Я</text>
<path d="M37,7 h5 l-1.8,2.5 v3 h-1.4 v-3 z" fill="#444"/>
<circle cx="38.5" cy="26.5" r="3.2" fill="none" stroke="#2a72c0" stroke-width="1.5"/>
<path d="M36,29 l-4,4" stroke="#2a72c0" stroke-width="1.8"/>
</svg>
<svg style="position:absolute;left:819.8px;top:116.3px" width="4.4" height="2.6"><path d="M0,0 h4.4 l-2.2,2.6 z" fill="#555"/></svg>
<svg style="position:absolute;left:846.4px;top:116.3px" width="4.4" height="2.6"><path d="M0,0 h4.4 l-2.2,2.6 z" fill="#555"/></svg>
<svg style="position:absolute;left:819.8px;top:133.8px" width="4.4" height="2.6"><path d="M0,0 h4.4 l-2.2,2.6 z" fill="#555"/></svg>
<svg style="position:absolute;left:846.4px;top:133.8px" width="4.4" height="2.6"><path d="M0,0 h4.4 l-2.2,2.6 z" fill="#555"/></svg>
<svg style="position:absolute;left:819.8px;top:152.3px" width="4.4" height="2.6"><path d="M0,0 h4.4 l-2.2,2.6 z" fill="#555"/></svg>
<div style="position:absolute;left:793.00px;top:166.58px;font:400 9px/9px 'Liberation Sans',sans-serif;color:#333333;white-space:pre;transform:scaleX(0.9918);transform-origin:0 0;-webkit-text-stroke:0.25px #333;">Редактирование</div>
<div style="position:absolute;left:863px;top:109px;width:1px;height:65px;background:#d2d2d2;"></div>
<svg style="position:absolute;left:875px;top:167px" width="11" height="7"><path d="M1,5.5 l4.5,-4 l4.5,4" fill="none" stroke="#555" stroke-width="1"/></svg>
<div style="position:absolute;left:175px;top:176.8px;width:715.5px;height:301px;background:#e6e6e6;"></div>
<div style="position:absolute;left:175px;top:176.8px;width:715.5px;height:3.5px;background:#dedede;"></div>
<div style="position:absolute;left:178.5px;top:186.5px;width:120.5px;height:19px;background:#ffffff;box-sizing:border-box;border:1px solid #dadada"></div>
<div style="position:absolute;left:184.00px;top:191.76px;font:400 9.5px/9.5px 'Liberation Sans',sans-serif;color:#333;white-space:pre;transform:scaleX(0.9892);transform-origin:0 0;">A1</div>
<svg style="position:absolute;left:286px;top:190px" width="10" height="8"><path d="M1.5,2.5 h6 l-3,3.5 z" fill="#666"/></svg>
<svg style="position:absolute;left:309px;top:191px" width="5" height="10"><circle cx="2.25" cy="1.8" r="0.75" fill="#888"/><circle cx="2.25" cy="4.8" r="0.75" fill="#888"/><circle cx="2.25" cy="7.8" r="0.75" fill="#888"/></svg>
<div style="position:absolute;left:323px;top:185.5px;width:85px;height:20px;background:#ffffff;box-sizing:border-box;border:1px solid #d6d6d6"></div>
<svg style="position:absolute;left:330px;top:189px" width="75" height="14">
<path d="M3.5,2.5 l8,8 M11.5,2.5 l-8,8" stroke="#b8b8b8" stroke-width="1.3"/>
<path d="M31,7 l3,3.5 l6.5,-7.5" fill="none" stroke="#b8b8b8" stroke-width="1.4"/>
</svg>
<div style="position:absolute;left:389.50px;top:191.19px;font:700 11px/11px 'Liberation Serif',sans-serif;color:#4a4a4a;white-space:pre;font-style:italic;">f</div>
<div style="position:absolute;left:394.30px;top:193.95px;font:700 7.5px/7.5px 'Liberation Serif',sans-serif;color:#4a4a4a;white-space:pre;font-style:italic;">x</div>
<div style="position:absolute;left:411px;top:185.5px;width:475px;height:20px;background:#ffffff;box-sizing:border-box;border:1px solid #d6d6d6"></div>
<div style="position:absolute;left:420.00px;top:192.16px;font:400 9.5px/9.5px 'Liberation Sans',sans-serif;color:#333;white-space:pre;transform:scaleX(1.1522);transform-origin:0 0;">Месяц</div>
<svg style="position:absolute;left:876px;top:192px" width="10" height="8"><path d="M1.5,1.5 l3,3 l3,-3" fill="none" stroke="#555" stroke-width="1.2"/></svg>
<div style="position:absolute;left:175px;top:214px;width:699px;height:14.300000000000011px;background:#e6e6e6;"></div>
<div style="position:absolute;left:193.3px;top:214px;width:70.69999999999999px;height:14.300000000000011px;background:#d2d2d2;"></div>
<svg style="position:absolute;left:181px;top:215px" width="12" height="12"><path d="M10.5,1 v10 h-10 z" fill="#b9b9b9"/></svg>
<div style="position:absolute;left:263.5px;top:214px;width:1px;height:14.300000000000011px;background:#cfcfcf;"></div>
<div style="position:absolute;left:359.1px;top:214px;width:1px;height:14.300000000000011px;background:#cfcfcf;"></div>
<div style="position:absolute;left:444.2px;top:214px;width:1px;height:14.300000000000011px;background:#cfcfcf;"></div>
<div style="position:absolute;left:493.9px;top:214px;width:1px;height:14.300000000000011px;background:#cfcfcf;"></div>
<div style="position:absolute;left:543.7px;top:214px;width:1px;height:14.300000000000011px;background:#cfcfcf;"></div>
<div style="position:absolute;left:593.5px;top:214px;width:1px;height:14.300000000000011px;background:#cfcfcf;"></div>
<div style="position:absolute;left:643.2px;top:214px;width:1px;height:14.300000000000011px;background:#cfcfcf;"></div>
<div style="position:absolute;left:693.0px;top:214px;width:1px;height:14.300000000000011px;background:#cfcfcf;"></div>
<div style="position:absolute;left:742.7px;top:214px;width:1px;height:14.300000000000011px;background:#cfcfcf;"></div>
<div style="position:absolute;left:792.5px;top:214px;width:1px;height:14.300000000000011px;background:#cfcfcf;"></div>
<div style="position:absolute;left:842.2px;top:214px;width:1px;height:14.300000000000011px;background:#cfcfcf;"></div>
<div style="position:absolute;left:225.31px;top:216.53px;font:400 10px/10px 'Liberation Sans',sans-serif;color:#1e6b45;white-space:pre;-webkit-text-stroke:0.35px #1e6b45;">A</div>
<div style="position:absolute;left:308.46px;top:216.53px;font:400 10px/10px 'Liberation Sans',sans-serif;color:#2f4f5f;white-space:pre;-webkit-text-stroke:0.35px #2f4f5f;">B</div>
<div style="position:absolute;left:398.53px;top:216.53px;font:400 10px/10px 'Liberation Sans',sans-serif;color:#2f4f5f;white-space:pre;-webkit-text-stroke:0.35px #2f4f5f;">C</div>
<div style="position:absolute;left:465.93px;top:216.53px;font:400 10px/10px 'Liberation Sans',sans-serif;color:#2f4f5f;white-space:pre;-webkit-text-stroke:0.35px #2f4f5f;">D</div>
<div style="position:absolute;left:515.96px;top:216.53px;font:400 10px/10px 'Liberation Sans',sans-serif;color:#2f4f5f;white-space:pre;-webkit-text-stroke:0.35px #2f4f5f;">E</div>
<div style="position:absolute;left:566.05px;top:216.53px;font:400 10px/10px 'Liberation Sans',sans-serif;color:#2f4f5f;white-space:pre;-webkit-text-stroke:0.35px #2f4f5f;">F</div>
<div style="position:absolute;left:614.96px;top:216.53px;font:400 10px/10px 'Liberation Sans',sans-serif;color:#2f4f5f;white-space:pre;-webkit-text-stroke:0.35px #2f4f5f;">G</div>
<div style="position:absolute;left:664.98px;top:216.53px;font:400 10px/10px 'Liberation Sans',sans-serif;color:#2f4f5f;white-space:pre;-webkit-text-stroke:0.35px #2f4f5f;">H</div>
<div style="position:absolute;left:716.96px;top:216.53px;font:400 10px/10px 'Liberation Sans',sans-serif;color:#2f4f5f;white-space:pre;-webkit-text-stroke:0.35px #2f4f5f;">I</div>
<div style="position:absolute;left:765.60px;top:216.53px;font:400 10px/10px 'Liberation Sans',sans-serif;color:#2f4f5f;white-space:pre;-webkit-text-stroke:0.35px #2f4f5f;">J</div>
<div style="position:absolute;left:814.51px;top:216.53px;font:400 10px/10px 'Liberation Sans',sans-serif;color:#2f4f5f;white-space:pre;-webkit-text-stroke:0.35px #2f4f5f;">K</div>
<div style="position:absolute;left:865.02px;top:216.53px;font:400 10px/10px 'Liberation Sans',sans-serif;color:#2f4f5f;white-space:pre;-webkit-text-stroke:0.35px #2f4f5f;">L</div>
<div style="position:absolute;left:175px;top:227.70000000000002px;width:699px;height:0.8px;background:#c8c8c8;"></div>
<div style="position:absolute;left:193.3px;top:228.3px;width:680.7px;height:250.3px;background:#ffffff;"></div>
<div style="position:absolute;left:175px;top:228.3px;width:18.3px;height:250.3px;background:#e6e6e6;"></div>
<div style="position:absolute;left:175px;top:228.3px;width:18.3px;height:31.2px;background:#dcdcdc;"></div>
<div style="position:absolute;left:193.3px;top:259.0px;width:680.7px;height:1px;background:#dadada;"></div>
<div style="position:absolute;left:175px;top:259.0px;width:18.3px;height:1px;background:#cdcdcd;"></div>
<div style="position:absolute;left:193.3px;top:274.55px;width:680.7px;height:1px;background:#dadada;"></div>
<div style="position:absolute;left:175px;top:274.55px;width:18.3px;height:1px;background:#cdcdcd;"></div>
<div style="position:absolute;left:193.3px;top:290.1px;width:680.7px;height:1px;background:#dadada;"></div>
<div style="position:absolute;left:175px;top:290.1px;width:18.3px;height:1px;background:#cdcdcd;"></div>
<div style="position:absolute;left:193.3px;top:305.65px;width:680.7px;height:1px;background:#dadada;"></div>
<div style="position:absolute;left:175px;top:305.65px;width:18.3px;height:1px;background:#cdcdcd;"></div>
<div style="position:absolute;left:193.3px;top:321.2px;width:680.7px;height:1px;background:#dadada;"></div>
<div style="position:absolute;left:175px;top:321.2px;width:18.3px;height:1px;background:#cdcdcd;"></div>
<div style="position:absolute;left:193.3px;top:336.75px;width:680.7px;height:1px;background:#dadada;"></div>
<div style="position:absolute;left:175px;top:336.75px;width:18.3px;height:1px;background:#cdcdcd;"></div>
<div style="position:absolute;left:193.3px;top:352.3px;width:680.7px;height:1px;background:#dadada;"></div>
<div style="position:absolute;left:175px;top:352.3px;width:18.3px;height:1px;background:#cdcdcd;"></div>
<div style="position:absolute;left:193.3px;top:367.85px;width:680.7px;height:1px;background:#dadada;"></div>
<div style="position:absolute;left:175px;top:367.85px;width:18.3px;height:1px;background:#cdcdcd;"></div>
<div style="position:absolute;left:193.3px;top:383.4px;width:680.7px;height:1px;background:#dadada;"></div>
<div style="position:absolute;left:175px;top:383.4px;width:18.3px;height:1px;background:#cdcdcd;"></div>
<div style="position:absolute;left:193.3px;top:398.95000000000005px;width:680.7px;height:1px;background:#dadada;"></div>
<div style="position:absolute;left:175px;top:398.95000000000005px;width:18.3px;height:1px;background:#cdcdcd;"></div>
<div style="position:absolute;left:193.3px;top:414.5px;width:680.7px;height:1px;background:#dadada;"></div>
<div style="position:absolute;left:175px;top:414.5px;width:18.3px;height:1px;background:#cdcdcd;"></div>
<div style="position:absolute;left:193.3px;top:430.05px;width:680.7px;height:1px;background:#dadada;"></div>
<div style="position:absolute;left:175px;top:430.05px;width:18.3px;height:1px;background:#cdcdcd;"></div>
<div style="position:absolute;left:193.3px;top:445.6px;width:680.7px;height:1px;background:#dadada;"></div>
<div style="position:absolute;left:175px;top:445.6px;width:18.3px;height:1px;background:#cdcdcd;"></div>
<div style="position:absolute;left:193.3px;top:461.15px;width:680.7px;height:1px;background:#dadada;"></div>
<div style="position:absolute;left:175px;top:461.15px;width:18.3px;height:1px;background:#cdcdcd;"></div>
<div style="position:absolute;left:193.3px;top:476.70000000000005px;width:680.7px;height:1px;background:#dadada;"></div>
<div style="position:absolute;left:175px;top:476.70000000000005px;width:18.3px;height:1px;background:#cdcdcd;"></div>
<div style="position:absolute;left:263.5px;top:228.3px;width:1px;height:250.3px;background:#dadada;"></div>
<div style="position:absolute;left:359.1px;top:228.3px;width:1px;height:250.3px;background:#dadada;"></div>
<div style="position:absolute;left:444.2px;top:228.3px;width:1px;height:250.3px;background:#dadada;"></div>
<div style="position:absolute;left:493.9px;top:228.3px;width:1px;height:250.3px;background:#dadada;"></div>
<div style="position:absolute;left:543.7px;top:228.3px;width:1px;height:250.3px;background:#dadada;"></div>
<div style="position:absolute;left:593.5px;top:228.3px;width:1px;height:250.3px;background:#dadada;"></div>
<div style="position:absolute;left:643.2px;top:228.3px;width:1px;height:250.3px;background:#dadada;"></div>
<div style="position:absolute;left:693.0px;top:228.3px;width:1px;height:250.3px;background:#dadada;"></div>
<div style="position:absolute;left:742.7px;top:228.3px;width:1px;height:250.3px;background:#dadada;"></div>
<div style="position:absolute;left:792.5px;top:228.3px;width:1px;height:250.3px;background:#dadada;"></div>
<div style="position:absolute;left:842.2px;top:228.3px;width:1px;height:250.3px;background:#dadada;"></div>
<div style="position:absolute;left:192.8px;top:228.3px;width:1px;height:250.3px;background:#c8c8c8;"></div>
<div style="position:absolute;left:874px;top:228.3px;width:1px;height:250.3px;background:#d0d0d0;"></div>
<div style="position:absolute;left:193.3px;top:228.3px;width:70.69999999999999px;height:31.19999999999999px;background:#68cf40;"></div>
<div style="position:absolute;left:264px;top:228.3px;width:95.60000000000002px;height:31.19999999999999px;background:#68cf40;"></div>
<div style="position:absolute;left:359.6px;top:228.3px;width:85.09999999999997px;height:31.19999999999999px;background:#68cf40;"></div>
<div style="position:absolute;left:193.3px;top:259.5px;width:70.69999999999999px;height:186.60000000000002px;background:#fed75a;"></div>
<div style="position:absolute;left:192.8px;top:258.8px;width:252.39999999999998px;height:1.1px;background:#1d3d1d;"></div>
<div style="position:absolute;left:193px;top:274.55px;width:251.7px;height:1.0px;background:#3a3a3a;"></div>
<div style="position:absolute;left:193px;top:290.1px;width:251.7px;height:1.0px;background:#3a3a3a;"></div>
<div style="position:absolute;left:193px;top:305.65px;width:251.7px;height:1.0px;background:#3a3a3a;"></div>
<div style="position:absolute;left:193px;top:321.2px;width:251.7px;height:1.0px;background:#3a3a3a;"></div>
<div style="position:absolute;left:193px;top:336.75px;width:251.7px;height:1.0px;background:#3a3a3a;"></div>
<div style="position:absolute;left:193px;top:352.3px;width:251.7px;height:1.0px;background:#3a3a3a;"></div>
<div style="position:absolute;left:193px;top:367.85px;width:251.7px;height:1.0px;background:#3a3a3a;"></div>
<div style="position:absolute;left:193px;top:383.4px;width:251.7px;height:1.0px;background:#3a3a3a;"></div>
<div style="position:absolute;left:193px;top:398.95000000000005px;width:251.7px;height:1.0px;background:#3a3a3a;"></div>
<div style="position:absolute;left:193px;top:414.5px;width:251.7px;height:1.0px;background:#3a3a3a;"></div>
<div style="position:absolute;left:193px;top:430.05px;width:251.7px;height:1.0px;background:#3a3a3a;"></div>
<div style="position:absolute;left:193px;top:445.6px;width:251.7px;height:1.0px;background:#3a3a3a;"></div>
<div style="position:absolute;left:262.7px;top:228.3px;width:1.2px;height:217.8px;background:#1e1e1e;"></div>
<div style="position:absolute;left:358.7px;top:228.3px;width:1.2px;height:217.8px;background:#1e1e1e;"></div>
<div style="position:absolute;left:443.7px;top:228.3px;width:1.2px;height:217.8px;background:#1e1e1e;"></div>
<div style="position:absolute;left:192.8px;top:227.8px;width:71.5px;height:32.2px;background:transparent;box-sizing:border-box;border:1.5px solid #1d5e3a"></div>
<div style="position:absolute;left:194.3px;top:257.6px;width:68.5px;height:0.9px;background:#b8f0a0;"></div>
<div style="position:absolute;left:262.2px;top:258.0px;width:3.2px;height:3.2px;background:#1d5e3a;border-radius:1px"></div>
<div style="position:absolute;left:181.80px;top:250.34px;font:400 10px/10px 'Liberation Sans',sans-serif;color:#2e2e2e;white-space:pre;-webkit-text-stroke:0.3px #2e2e2e;">1</div>
<div style="position:absolute;left:181.80px;top:263.99px;font:400 10px/10px 'Liberation Sans',sans-serif;color:#2e2e2e;white-space:pre;-webkit-text-stroke:0.3px #2e2e2e;">2</div>
<div style="position:absolute;left:181.80px;top:279.54px;font:400 10px/10px 'Liberation Sans',sans-serif;color:#2e2e2e;white-space:pre;-webkit-text-stroke:0.3px #2e2e2e;">3</div>
<div style="position:absolute;left:181.80px;top:295.09px;font:400 10px/10px 'Liberation Sans',sans-serif;color:#2e2e2e;white-space:pre;-webkit-text-stroke:0.3px #2e2e2e;">4</div>
<div style="position:absolute;left:181.80px;top:310.64px;font:400 10px/10px 'Liberation Sans',sans-serif;color:#2e2e2e;white-space:pre;-webkit-text-stroke:0.3px #2e2e2e;">5</div>
<div style="position:absolute;left:181.80px;top:326.19px;font:400 10px/10px 'Liberation Sans',sans-serif;color:#2e2e2e;white-space:pre;-webkit-text-stroke:0.3px #2e2e2e;">6</div>
<div style="position:absolute;left:181.80px;top:341.74px;font:400 10px/10px 'Liberation Sans',sans-serif;color:#2e2e2e;white-space:pre;-webkit-text-stroke:0.3px #2e2e2e;">7</div>
<div style="position:absolute;left:181.80px;top:357.29px;font:400 10px/10px 'Liberation Sans',sans-serif;color:#2e2e2e;white-space:pre;-webkit-text-stroke:0.3px #2e2e2e;">8</div>
<div style="position:absolute;left:181.80px;top:372.84px;font:400 10px/10px 'Liberation Sans',sans-serif;color:#2e2e2e;white-space:pre;-webkit-text-stroke:0.3px #2e2e2e;">9</div>
<div style="position:absolute;left:179.80px;top:388.39px;font:400 10px/10px 'Liberation Sans',sans-serif;color:#2e2e2e;white-space:pre;-webkit-text-stroke:0.3px #2e2e2e;">10</div>
<div style="position:absolute;left:179.80px;top:403.94px;font:400 10px/10px 'Liberation Sans',sans-serif;color:#2e2e2e;white-space:pre;-webkit-text-stroke:0.3px #2e2e2e;">11</div>
<div style="position:absolute;left:179.80px;top:419.49px;font:400 10px/10px 'Liberation Sans',sans-serif;color:#2e2e2e;white-space:pre;-webkit-text-stroke:0.3px #2e2e2e;">12</div>
<div style="position:absolute;left:179.80px;top:435.04px;font:400 10px/10px 'Liberation Sans',sans-serif;color:#2e2e2e;white-space:pre;-webkit-text-stroke:0.3px #2e2e2e;">13</div>
<div style="position:absolute;left:179.80px;top:450.59px;font:400 10px/10px 'Liberation Sans',sans-serif;color:#2e2e2e;white-space:pre;-webkit-text-stroke:0.3px #2e2e2e;">14</div>
<div style="position:absolute;left:179.80px;top:466.14px;font:400 10px/10px 'Liberation Sans',sans-serif;color:#2e2e2e;white-space:pre;-webkit-text-stroke:0.3px #2e2e2e;">15</div>
<div style="position:absolute;left:211.95px;top:240.97px;font:700 10.2px/10.2px 'Liberation Sans',sans-serif;color:#101010;white-space:pre;transform:scaleX(1.0505);transform-origin:0 0;-webkit-text-stroke:0.2px #101010;">Месяц</div>
<div style="position:absolute;left:271.10px;top:232.67px;font:700 10.2px/10.2px 'Liberation Sans',sans-serif;color:#101010;white-space:pre;transform:scaleX(0.9693);transform-origin:0 0;-webkit-text-stroke:0.2px #101010;">Среднесуточная</div>
<div style="position:absolute;left:271.45px;top:247.67px;font:700 10.2px/10.2px 'Liberation Sans',sans-serif;color:#101010;white-space:pre;transform:scaleX(0.9849);transform-origin:0 0;-webkit-text-stroke:0.2px #101010;">температура, С°</div>
<div style="position:absolute;left:381.50px;top:232.67px;font:700 10.2px/10.2px 'Liberation Sans',sans-serif;color:#101010;white-space:pre;transform:scaleX(0.9551);transform-origin:0 0;-webkit-text-stroke:0.2px #101010;">Средняя</div>
<div style="position:absolute;left:376.00px;top:247.67px;font:700 10.2px/10.2px 'Liberation Sans',sans-serif;color:#101010;white-space:pre;transform:scaleX(0.9514);transform-origin:0 0;-webkit-text-stroke:0.2px #101010;">влажность</div>
<div style="position:absolute;left:196.40px;top:262.96px;font:400 10.5px/10.5px 'Liberation Sans',sans-serif;color:#141414;white-space:pre;-webkit-text-stroke:0.25px #141414;">Январь</div>
<div style="position:absolute;left:339.51px;top:263.26px;font:400 10.5px/10.5px 'Liberation Sans',sans-serif;color:#1a1a1a;white-space:pre;-webkit-text-stroke:0.2px #1a1a1a;">-6,6</div>
<div style="position:absolute;left:421.86px;top:263.26px;font:400 10.5px/10.5px 'Liberation Sans',sans-serif;color:#1a1a1a;white-space:pre;-webkit-text-stroke:0.2px #1a1a1a;">0,85</div>
<div style="position:absolute;left:196.40px;top:278.51px;font:400 10.5px/10.5px 'Liberation Sans',sans-serif;color:#141414;white-space:pre;-webkit-text-stroke:0.25px #141414;">Февраль</div>
<div style="position:absolute;left:348.26px;top:278.81px;font:400 10.5px/10.5px 'Liberation Sans',sans-serif;color:#1a1a1a;white-space:pre;-webkit-text-stroke:0.2px #1a1a1a;">-6</div>
<div style="position:absolute;left:421.86px;top:278.81px;font:400 10.5px/10.5px 'Liberation Sans',sans-serif;color:#1a1a1a;white-space:pre;-webkit-text-stroke:0.2px #1a1a1a;">0,81</div>
<div style="position:absolute;left:196.40px;top:294.06px;font:400 10.5px/10.5px 'Liberation Sans',sans-serif;color:#141414;white-space:pre;-webkit-text-stroke:0.25px #141414;">Март</div>
<div style="position:absolute;left:339.51px;top:294.36px;font:400 10.5px/10.5px 'Liberation Sans',sans-serif;color:#1a1a1a;white-space:pre;-webkit-text-stroke:0.2px #1a1a1a;">-0,7</div>
<div style="position:absolute;left:421.86px;top:294.36px;font:400 10.5px/10.5px 'Liberation Sans',sans-serif;color:#1a1a1a;white-space:pre;-webkit-text-stroke:0.2px #1a1a1a;">0,73</div>
<div style="position:absolute;left:196.40px;top:309.61px;font:400 10.5px/10.5px 'Liberation Sans',sans-serif;color:#141414;white-space:pre;-webkit-text-stroke:0.25px #141414;">Апрель</div>
<div style="position:absolute;left:351.76px;top:309.91px;font:400 10.5px/10.5px 'Liberation Sans',sans-serif;color:#1a1a1a;white-space:pre;-webkit-text-stroke:0.2px #1a1a1a;">7</div>
<div style="position:absolute;left:421.86px;top:309.91px;font:400 10.5px/10.5px 'Liberation Sans',sans-serif;color:#1a1a1a;white-space:pre;-webkit-text-stroke:0.2px #1a1a1a;">0,66</div>
<div style="position:absolute;left:196.40px;top:325.16px;font:400 10.5px/10.5px 'Liberation Sans',sans-serif;color:#141414;white-space:pre;-webkit-text-stroke:0.25px #141414;">Май</div>
<div style="position:absolute;left:337.16px;top:325.46px;font:400 10.5px/10.5px 'Liberation Sans',sans-serif;color:#1a1a1a;white-space:pre;-webkit-text-stroke:0.2px #1a1a1a;">13,6</div>
<div style="position:absolute;left:421.86px;top:325.46px;font:400 10.5px/10.5px 'Liberation Sans',sans-serif;color:#1a1a1a;white-space:pre;-webkit-text-stroke:0.2px #1a1a1a;">0,66</div>
<div style="position:absolute;left:196.40px;top:340.71px;font:400 10.5px/10.5px 'Liberation Sans',sans-serif;color:#141414;white-space:pre;-webkit-text-stroke:0.25px #141414;">Июнь</div>
<div style="position:absolute;left:337.16px;top:341.01px;font:400 10.5px/10.5px 'Liberation Sans',sans-serif;color:#1a1a1a;white-space:pre;-webkit-text-stroke:0.2px #1a1a1a;">17,2</div>
<div style="position:absolute;left:421.86px;top:341.01px;font:400 10.5px/10.5px 'Liberation Sans',sans-serif;color:#1a1a1a;white-space:pre;-webkit-text-stroke:0.2px #1a1a1a;">0,69</div>
<div style="position:absolute;left:196.40px;top:356.26px;font:400 10.5px/10.5px 'Liberation Sans',sans-serif;color:#141414;white-space:pre;-webkit-text-stroke:0.25px #141414;">Июль</div>
<div style="position:absolute;left:337.16px;top:356.56px;font:400 10.5px/10.5px 'Liberation Sans',sans-serif;color:#1a1a1a;white-space:pre;-webkit-text-stroke:0.2px #1a1a1a;">20,2</div>
<div style="position:absolute;left:421.86px;top:356.56px;font:400 10.5px/10.5px 'Liberation Sans',sans-serif;color:#1a1a1a;white-space:pre;-webkit-text-stroke:0.2px #1a1a1a;">0,72</div>
<div style="position:absolute;left:196.40px;top:371.81px;font:400 10.5px/10.5px 'Liberation Sans',sans-serif;color:#141414;white-space:pre;-webkit-text-stroke:0.25px #141414;">Август</div>
<div style="position:absolute;left:345.91px;top:372.11px;font:400 10.5px/10.5px 'Liberation Sans',sans-serif;color:#1a1a1a;white-space:pre;-webkit-text-stroke:0.2px #1a1a1a;">18</div>
<div style="position:absolute;left:421.86px;top:372.11px;font:400 10.5px/10.5px 'Liberation Sans',sans-serif;color:#1a1a1a;white-space:pre;-webkit-text-stroke:0.2px #1a1a1a;">0,75</div>
<div style="position:absolute;left:196.40px;top:387.36px;font:400 10.5px/10.5px 'Liberation Sans',sans-serif;color:#141414;white-space:pre;-webkit-text-stroke:0.25px #141414;">Сентябрь</div>
<div style="position:absolute;left:337.16px;top:387.66px;font:400 10.5px/10.5px 'Liberation Sans',sans-serif;color:#1a1a1a;white-space:pre;-webkit-text-stroke:0.2px #1a1a1a;">12,1</div>
<div style="position:absolute;left:421.86px;top:387.66px;font:400 10.5px/10.5px 'Liberation Sans',sans-serif;color:#1a1a1a;white-space:pre;-webkit-text-stroke:0.2px #1a1a1a;">0,81</div>
<div style="position:absolute;left:196.40px;top:402.91px;font:400 10.5px/10.5px 'Liberation Sans',sans-serif;color:#141414;white-space:pre;-webkit-text-stroke:0.25px #141414;">Октябрь</div>
<div style="position:absolute;left:342.99px;top:403.21px;font:400 10.5px/10.5px 'Liberation Sans',sans-serif;color:#1a1a1a;white-space:pre;-webkit-text-stroke:0.2px #1a1a1a;">5,9</div>
<div style="position:absolute;left:421.86px;top:403.21px;font:400 10.5px/10.5px 'Liberation Sans',sans-serif;color:#1a1a1a;white-space:pre;-webkit-text-stroke:0.2px #1a1a1a;">0,83</div>
<div style="position:absolute;left:196.40px;top:418.46px;font:400 10.5px/10.5px 'Liberation Sans',sans-serif;color:#141414;white-space:pre;-webkit-text-stroke:0.25px #141414;">Ноябрь</div>
<div style="position:absolute;left:351.76px;top:418.76px;font:400 10.5px/10.5px 'Liberation Sans',sans-serif;color:#1a1a1a;white-space:pre;-webkit-text-stroke:0.2px #1a1a1a;">0</div>
<div style="position:absolute;left:421.86px;top:418.76px;font:400 10.5px/10.5px 'Liberation Sans',sans-serif;color:#1a1a1a;white-space:pre;-webkit-text-stroke:0.2px #1a1a1a;">0,85</div>
<div style="position:absolute;left:196.40px;top:434.01px;font:400 10.5px/10.5px 'Liberation Sans',sans-serif;color:#141414;white-space:pre;-webkit-text-stroke:0.25px #141414;">Декабрь</div>
<div style="position:absolute;left:339.51px;top:434.31px;font:400 10.5px/10.5px 'Liberation Sans',sans-serif;color:#1a1a1a;white-space:pre;-webkit-text-stroke:0.2px #1a1a1a;">-3,9</div>
<div style="position:absolute;left:421.86px;top:434.31px;font:400 10.5px/10.5px 'Liberation Sans',sans-serif;color:#1a1a1a;white-space:pre;-webkit-text-stroke:0.2px #1a1a1a;">0,86</div>
<div style="position:absolute;left:875px;top:213px;width:15.5px;height:265px;background:#e6e6e6;"></div>
<div style="position:absolute;left:877.5px;top:215.8px;width:10.5px;height:10.5px;background:#ffffff;box-sizing:border-box;border:1px solid #cfcfcf"></div>
<svg style="position:absolute;left:879px;top:218px" width="8" height="6"><path d="M1,4.5 h6 l-3,-3.5 z" fill="#555"/></svg>
<div style="position:absolute;left:876.8px;top:227.5px;width:12px;height:191.5px;background:#ffffff;box-sizing:border-box;border:1px solid #cfcfcf"></div>
<div style="position:absolute;left:877px;top:419.5px;width:12px;height:48.5px;background:#dedede;"></div>
<div style="position:absolute;left:877px;top:468px;width:11.5px;height:11.5px;background:#ffffff;box-sizing:border-box;border:1px solid #cfcfcf"></div>
<svg style="position:absolute;left:879px;top:471px" width="8" height="6"><path d="M1,1 h6 l-3,3.5 z" fill="#555"/></svg>
<div style="position:absolute;left:175px;top:478.6px;width:715.5px;height:22.5px;background:#e4e4e4;"></div>
<div style="position:absolute;left:175px;top:478.6px;width:700px;height:1px;background:#cfcfcf;"></div>
<svg style="position:absolute;left:192px;top:484px" width="32" height="12">
<path d="M6.5,3 v6 l-3,-3 z" fill="#c9c9c9"/>
<path d="M26,3 v6 l3,-3 z" fill="#c9c9c9"/>
</svg>
<div style="position:absolute;left:252.6px;top:479.2px;width:83.2px;height:19.8px;background:#ffffff;"></div>
<div style="position:absolute;left:252.6px;top:497.2px;width:83.2px;height:1.8px;background:#1e7145;"></div>
<div style="position:absolute;left:261.50px;top:484.31px;font:700 10.5px/10.5px 'Liberation Sans',sans-serif;color:#1d6b43;white-space:pre;transform:scaleX(0.9444);transform-origin:0 0;">microexcel.ru</div>
<div style="position:absolute;left:346.40px;top:485.16px;font:400 9.5px/9.5px 'Liberation Sans',sans-serif;color:#4a4a4a;white-space:pre;transform:scaleX(0.9639);transform-origin:0 0;-webkit-text-stroke:0.2px #4a4a4a;">Лист5</div>
<div style="position:absolute;left:380.5px;top:483.5px;width:1px;height:14px;background:#b9b9b9;"></div>
<svg style="position:absolute;left:406px;top:484px" width="16" height="14">
<circle cx="7.7" cy="6.5" r="5.6" fill="none" stroke="#777" stroke-width="1.1"/>
<path d="M7.7,3.5 v6 M4.7,6.5 h6" stroke="#555" stroke-width="1.3"/>
</svg>
<svg style="position:absolute;left:602px;top:485px" width="5" height="10"><circle cx="2.5" cy="1.5" r="0.7" fill="#999"/><circle cx="2.5" cy="4.5" r="0.7" fill="#999"/><circle cx="2.5" cy="7.5" r="0.7" fill="#999"/></svg>
<div style="position:absolute;left:618px;top:485.7px;width:10.5px;height:10.6px;background:#ffffff;box-sizing:border-box;border:1px solid #d0d0d0"></div>
<svg style="position:absolute;left:620px;top:487px" width="7" height="8"><path d="M5,1 v6 l-3.5,-3 z" fill="#555"/></svg>
<div style="position:absolute;left:629.5px;top:485.7px;width:211px;height:10.6px;background:#ffffff;box-sizing:border-box;border:1px solid #d8d8d8"></div>
<div style="position:absolute;left:840.5px;top:485.7px;width:23.5px;height:10.6px;background:#d9d9d9;"></div>
<div style="position:absolute;left:864px;top:485.7px;width:10.5px;height:10.6px;background:#ffffff;box-sizing:border-box;border:1px solid #d0d0d0"></div>
<svg style="position:absolute;left:866px;top:487px" width="7" height="8"><path d="M2,1 v6 l3.5,-3 z" fill="#555"/></svg>
<div style="position:absolute;left:175px;top:501px;width:715.5px;height:17px;background:#f1f1f1;"></div>
<div style="position:absolute;left:175px;top:500.6px;width:715.5px;height:0.8px;background:#d5d5d5;"></div>
<div style="position:absolute;left:180.80px;top:504.98px;font:400 9px/9px 'Liberation Sans',sans-serif;color:#3a3a3a;white-space:pre;transform:scaleX(1.0145);transform-origin:0 0;-webkit-text-stroke:0.25px #3a3a3a;">Готово</div>
<svg style="position:absolute;left:223px;top:503px" width="13" height="13">
<circle cx="3.5" cy="3.3" r="2.3" fill="#555"/>
<rect x="6" y="2" width="5.5" height="3" fill="#555"/>
<rect x="1.5" y="7" width="10" height="4.5" fill="none" stroke="#555" stroke-width="1"/>
<path d="M4,11.5 v-2 M6.5,11.5 v-3 M9,11.5 v-4" stroke="#555" stroke-width="1"/>
</svg>
<div style="position:absolute;left:647.5px;top:501.4px;width:30px;height:16.4px;background:#c9c9c9;"></div>
<svg style="position:absolute;left:655px;top:502px" width="100" height="14">
<rect x="2.5" y="2.5" width="9" height="9" fill="none" stroke="#555" stroke-width="1"/>
<path d="M5.5,2.5 v9 M8.5,2.5 v9 M2.5,5.5 h9 M2.5,8.5 h9" stroke="#555" stroke-width="1"/>
<rect x="34" y="2.5" width="9.5" height="9" fill="none" stroke="#555" stroke-width="1"/>
<rect x="36" y="4" width="5.5" height="6" fill="none" stroke="#888" stroke-width="1"/>
<rect x="65" y="2.5" width="9.5" height="9" fill="none" stroke="#555" stroke-width="1"/>
<path d="M67.5,2.5 v4 h4.5 v-4" fill="none" stroke="#555" stroke-width="1"/>
</svg>
<div style="position:absolute;left:744.6px;top:509px;width:6.2px;height:1.3px;background:#555;"></div>
<div style="position:absolute;left:754.5px;top:509.2px;width:78.5px;height:1px;background:#c6c6c6;"></div>
<div style="position:absolute;left:792.4px;top:505px;width:4px;height:8.2px;background:#666;"></div>
<div style="position:absolute;left:836px;top:509px;width:6.2px;height:1.3px;background:#555;"></div>
<div style="position:absolute;left:838.6px;top:506.5px;width:1.1px;height:6px;background:#555;"></div>
<div style="position:absolute;left:853.60px;top:505.18px;font:400 9px/9px 'Liberation Sans',sans-serif;color:#444;white-space:pre;transform:scaleX(0.8774);transform-origin:0 0;-webkit-text-stroke:0.2px #444;">100 %</div>
</body></html>
